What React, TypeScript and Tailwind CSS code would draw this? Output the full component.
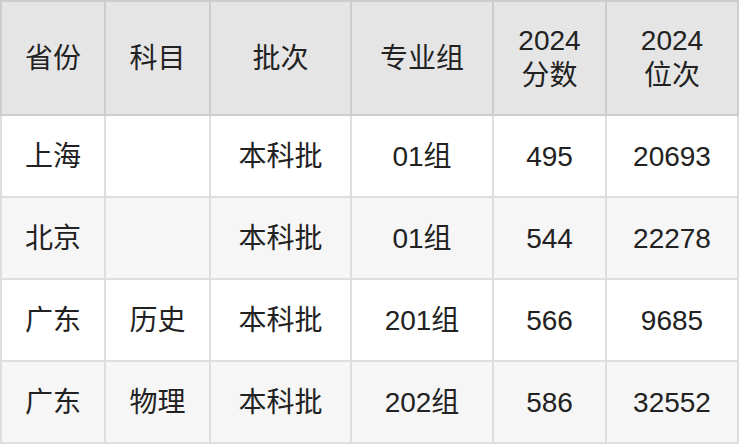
const headers = ['省份', '科目', '批次', '专业组', '2024\n分数', '2024\n位次'];

const rows = [
  ['上海', '', '本科批', '01组', '495', '20693'],
  ['北京', '', '本科批', '01组', '544', '22278'],
  ['广东', '历史', '本科批', '201组', '566', '9685'],
  ['广东', '物理', '本科批', '202组', '586', '32552'],
];

export default function App() {
  return (
    <div
      className="w-[740px] h-[444px] bg-white text-[#222] text-[28px] leading-[35px]"
      style={{ fontFamily: '"Liberation Sans", "Noto Sans CJK SC", sans-serif' }}
    >
      <div className="grid grid-cols-[106px_105px_141px_142px_113px_132px] grid-rows-[116px_82px_82px_82px_82px]">
        {headers.map((h, i) => (
          <div
            key={h}
            className={`flex flex-col items-center justify-center bg-[#e5e5e5] border-t-2 border-r-2 border-b-2 border-[#cdcdcd] ${i === 0 ? 'border-l-2' : ''}`}
          >
            {h.split('\n').map((line) => (
              <span key={line}>{line}</span>
            ))}
          </div>
        ))}
        {rows.map((r, ri) =>
          r.map((c, ci) => (
            <div
              key={`${ri}-${ci}`}
              className={`flex items-center justify-center border-r-2 border-b-2 border-[#dedede] ${ci === 0 ? 'border-l-2' : ''} ${ri % 2 === 1 ? 'bg-[#f6f6f6]' : 'bg-white'}`}
            >
              {c}
            </div>
          ))
        )}
      </div>
    </div>
  );
}
